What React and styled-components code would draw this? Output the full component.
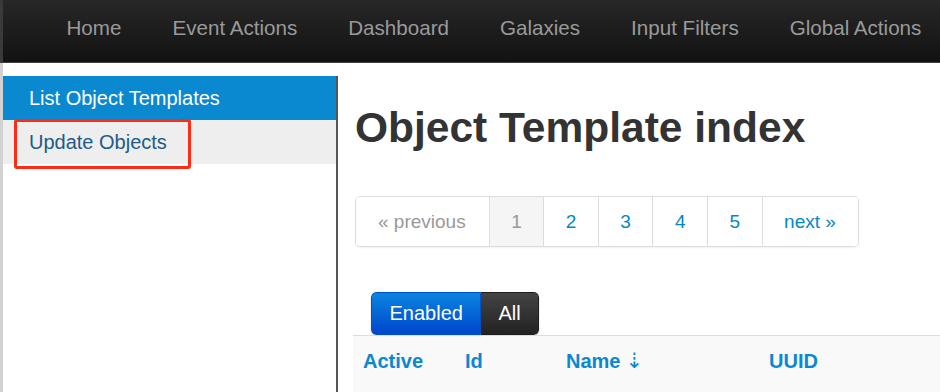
import styled, { createGlobalStyle } from "styled-components";

const navLinks = [
  "Home",
  "Event Actions",
  "Dashboard",
  "Galaxies",
  "Input Filters",
  "Global Actions",
];

const pages = ["1", "2", "3", "4", "5"];

const columns = [
  { label: "Active" },
  { label: "Id" },
  { label: "Name", sorted: true },
  { label: "UUID" },
];

export default function App() {
  return (
    <>
      <GlobalStyle />
      <Page>
        <NavBar>
          {navLinks.map((link) => (
            <NavItem key={link}>{link}</NavItem>
          ))}
        </NavBar>
        <Body>
          <Sidebar>
            <SideItem $active>List Object Templates</SideItem>
            <SideItem>Update Objects</SideItem>
            <Highlight />
          </Sidebar>
          <Main>
            <Title>Object Template index</Title>
            <Pagination>
              <PageItem $disabled>« previous</PageItem>
              {pages.map((p) => (
                <PageItem key={p} $current={p === "1"}>
                  {p}
                </PageItem>
              ))}
              <PageItem>next »</PageItem>
            </Pagination>
            <ButtonGroup>
              <ToggleButton $primary>Enabled</ToggleButton>
              <ToggleButton>All</ToggleButton>
            </ButtonGroup>
            <TableHead>
              {columns.map((col) => (
                <HeadCell key={col.label}>
                  {col.label}
                  {col.sorted && <SortArrow>⇣</SortArrow>}
                </HeadCell>
              ))}
            </TableHead>
          </Main>
        </Body>
      </Page>
    </>
  );
}

// Styles
const GlobalStyle = createGlobalStyle`
  html, body {
    margin: 0;
    padding: 0;
    background: #ffffff;
    overflow: hidden;
  }
  body {
    font-family: "Liberation Sans", Arial, Helvetica, sans-serif;
  }
`;

const Page = styled.div`
  display: flex;
  flex-direction: column;
  height: 100vh;
  width: 940px;
  overflow: hidden;
`;

const NavBar = styled.nav`
  display: flex;
  align-items: flex-start;
  height: 62px;
  padding-left: 38px;
  background: linear-gradient(#272727, #121212);
  border-bottom: 1px solid #3e3e3e;
  border-left: 3px solid #3a3a3a;
  flex-shrink: 0;
`;

const NavItem = styled.a`
  padding: 0 25.5px;
  font-size: 20.6px;
  line-height: 56px;
  color: #9a9a9a;
  white-space: nowrap;
`;

const Body = styled.div`
  display: flex;
  flex: 1;
  border-left: 3px solid #d2d2d2;
`;

const Sidebar = styled.aside`
  position: relative;
  width: 333px;
  margin-top: 13px;
  border-right: 2px solid #555555;
  background: #ffffff;
  flex-shrink: 0;
`;

const SideItem = styled.div`
  height: 44px;
  padding-left: 26px;
  font-size: 20px;
  line-height: 45px;
  color: ${(p) => (p.$active ? "#ffffff" : "#205b89")};
  background: ${(p) => (p.$active ? "#0a88d0" : "#eeeeee")};
`;

const Highlight = styled.div`
  position: absolute;
  left: 11px;
  top: 43px;
  width: 171px;
  height: 44px;
  border: 3px solid #ff2b14;
  border-radius: 3px;
`;

const Main = styled.main`
  display: flex;
  flex-direction: column;
  align-items: flex-start;
  flex: 1;
  padding-left: 17px;
  overflow: hidden;
`;

const Title = styled.h1`
  margin: 43px 0 0;
  font-size: 42.5px;
  line-height: 44px;
  font-weight: bold;
  color: #333333;
  white-space: nowrap;
`;

const Pagination = styled.ul`
  display: flex;
  margin: 46px 0 0;
  padding: 0;
  list-style: none;
  border: 1px solid #dddddd;
  border-radius: 5px;
  box-shadow: 0 1px 2px rgba(0, 0, 0, 0.06);
  overflow: hidden;
`;

const PageItem = styled.li`
  padding: 0 21.5px;
  height: 49px;
  font-size: 19px;
  line-height: 49px;
  color: ${(p) => (p.$disabled || p.$current ? "#999999" : "#0088cc")};
  background: ${(p) => (p.$current ? "#f5f5f5" : "#ffffff")};
  border-left: 1px solid #dddddd;

  &:first-child {
    border-left: none;
    padding: 0 23px 0 22px;
  }

  &:last-child {
    padding-right: 22px;
  }
`;

const ButtonGroup = styled.div`
  display: flex;
  margin: 45px 0 0 16px;
  border-radius: 5px;
  overflow: hidden;
  box-shadow: 0 1px 2px rgba(0, 0, 0, 0.2);
`;

const ToggleButton = styled.button`
  height: 43px;
  padding: 0 ${(p) => (p.$primary ? "17.5px" : "17px")};
  border: 1px solid ${(p) => (p.$primary ? "#0050c8" : "#1e1e1e")};
  font-family: "Liberation Sans", Arial, Helvetica, sans-serif;
  font-size: 20px;
  color: #ffffff;
  background: ${(p) =>
    p.$primary
      ? "linear-gradient(#0a84e0, #0046cc)"
      : "linear-gradient(#444444, #222222)"};

  & + & {
    border-left: none;
  }

  &:first-child {
    border-radius: 5px 0 0 5px;
  }

  &:last-child {
    border-radius: 0 5px 5px 0;
  }
`;

const TableHead = styled.div`
  display: grid;
  grid-template-columns: 102px 101px 203px 1fr;
  align-self: stretch;
  margin-left: -2px;
  border-top: 1px solid #dddddd;
  background: #f9f9f9;
  padding-top: 12px;
  height: 60px;
`;

const HeadCell = styled.div`
  padding-left: 10px;
  font-size: 20px;
  line-height: 27px;
  font-weight: bold;
  color: #0a88d0;
  white-space: nowrap;
`;

const SortArrow = styled.span`
  margin-left: 5px;
  font-family: "DejaVu Sans", sans-serif;
  font-size: 21px;
  font-weight: normal;
`;
